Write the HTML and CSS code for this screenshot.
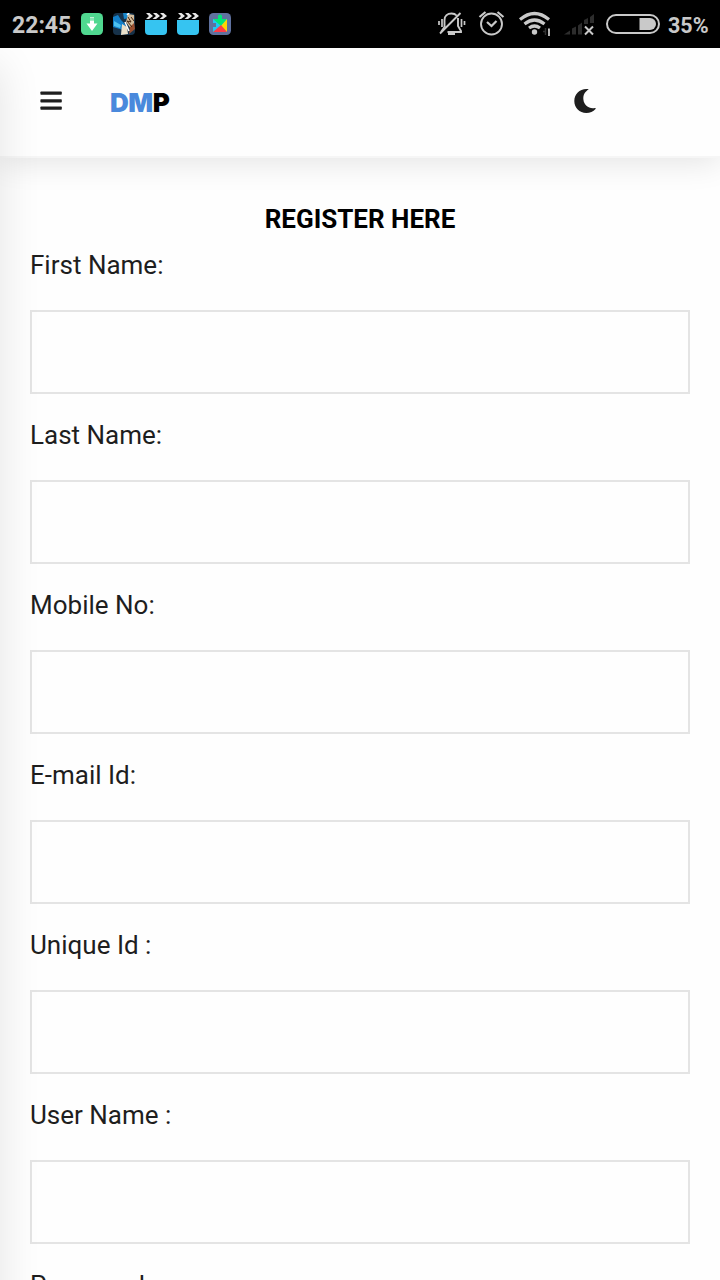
FILE: index.html
```html
<!DOCTYPE html>
<html lang="en">
<head>
<meta charset="utf-8">
<title>Register</title>
<link rel="stylesheet" href="styles.css">
</head>
<body>
<div class="statusbar">
  <span class="clock">22:45</span>
  <div class="notifications">
    <svg width="22" height="22" viewBox="0 0 22 22"><rect width="22" height="22" rx="4.500" fill="#50d890"/><path d="M9 7.500h4v3h3.500L11 18l-5.500-7.500H9z" fill="#fff"/><path d="M9 4.500h4M9 6h4" stroke="#c3f2d9"/></svg>
    <svg width="22" height="22" viewBox="0 0 22 22"><defs><clipPath id="g"><rect width="22" height="22" rx="4"/></clipPath></defs><g clip-path="url(#g)"><rect width="22" height="22" fill="#17324a"/><path d="M0 4l5-2 3 5 5 5-3 5-10-3z" fill="#137fc9"/><path d="M1 8l7 4-1 3-6-2z" fill="#4bc0ef"/><path d="M10 0h7l-1 5-5 1z" fill="#1987cb"/><path d="M15 1l6 1v9l-3 5-5-7z" fill="#d3bc9b"/><path d="M9 11l5 3 1 7-7 1z" fill="#e9dfc9"/><path d="M17 14l4-4 1 6-6 5z" fill="#9c4f2e"/><path d="M15 4l3 5-4-1 5 6M18 4l3 4" stroke="#47250f" stroke-width="1" fill="none"/><path d="M14 2l2-2M12 9l4 9" stroke="#fff" stroke-width="1.500"/></g></svg>
    <svg width="22" height="22" viewBox="0 0 22 22"><path d="M0 7h22v11a4 4 0 0 1-4 4H4a4 4 0 0 1-4-4z" fill="#36c4f1"/><path d="M1 0h3.500l3.500 3-4 3H1l3-3zM8 0h3.500L15 3l-4 3H7.500l3.500-3zM15 0h3.500L22 3l-4 3h-3.500L18 3z" fill="#e8e8e8"/></svg>
    <svg width="22" height="22" viewBox="0 0 22 22"><path d="M0 7h22v11a4 4 0 0 1-4 4H4a4 4 0 0 1-4-4z" fill="#36c4f1"/><path d="M1 0h3.500l3.500 3-4 3H1l3-3zM8 0h3.500L15 3l-4 3H7.500l3.500-3zM15 0h3.500L22 3l-4 3h-3.500L18 3z" fill="#e8e8e8"/></svg>
    <svg width="22" height="22" viewBox="0 0 22 22"><rect width="22" height="22" rx="4.500" fill="#5f719e"/><path d="M4 6h14v13H4v-5h3v-4H4z" fill="#20c9f4"/><path d="M4 6h5V4.500a2.200 2.200 0 1 1 4 0V6h5l-6 7z" fill="#00e676"/><path d="M18 6v13l-6-6z" fill="#ffd500"/><path d="M4 19l8-7 6 7z" fill="#ff3b47"/></svg>
  </div>
  <div class="system">
    <svg width="262" height="48" viewBox="434 0 262 48" fill="none" stroke="#c9c9c9" stroke-width="1.900">
      <path d="M444.500 27V20c0-4 3-6.500 7-6.500 2 0 4 .700 5 2M458 18v8l3 5v1h-13.500M441 32l3.500-5M460.500 13L440 33.500"/>
      <path d="M448 34h7" stroke-width="2"/>
      <path d="M442 19v8M439 21v4M461.500 19v8M464.500 21v4" stroke-width="1.700"/>
      <circle cx="491.500" cy="24" r="10.500"/><path d="M487 22l4.500 4 5-5M479.500 17l6-5M503.500 17l-6-5" stroke-width="2.200"/>
      <path d="M520 19.500q14.500-12 29 0M524.500 24q10-8 20 0M529 28q5.500-4 11 0" stroke-width="3.200"/><circle cx="534.500" cy="32" r="2.700" fill="#c9c9c9" stroke="none"/>
      <path d="M545.500 28v7M543 31.500h2" stroke="#333" stroke-width="1.500"/><path d="M548 29.500h1v6.500" stroke-width="1.800"/>
      <path d="M564 34.500l6-4v4zM572 34.500v-6l4-2v8zM578 34.500v-9l4-3v12zM584 24v-4l4-2v6zM590 23v-6l4-3v9z" fill="#2d2d2d" stroke="none"/>
      <path d="M585 26.500l8 8M593 26.500l-8 8" stroke-width="2"/>
      <rect x="607" y="15" width="52" height="18" rx="9" stroke-width="2"/><path d="M639.500 18H650a6 6 0 0 1 0 12h-10.500z" fill="#c9c9c9" stroke="none"/>
    </svg>
    <span class="percent">35%</span>
  </div>
</div>
<div class="page">
  <aside class="drawer"></aside>
  <header class="header">
    <svg width="22" height="20" viewBox="0 0 22 20"><g fill="#1e1e1e"><rect y="0.500" x=".4" width="21.400" height="3.200" rx=".7"/><rect y="8.200" x=".4" width="21.400" height="3.200" rx=".7"/><rect y="15.600" x=".4" width="21.400" height="3.200" rx=".7"/></g></svg>
    <div class="logo"><span class="logo-accent">DM</span>P</div>
    <svg class="moon" width="22" height="24" viewBox="0 0 22 24"><path d="M14.800.300C10.500 3.200 9 6.200 9.400 10.500c.600 6 5.600 9.600 11.500 8.500.700-.100 1 .400.600.900C19.300 22.600 16 24 12.300 24 5.500 24 .300 18.700.300 12S5.500 0 12.300 0c.800 0 1.700.100 2.500.300z" fill="#1e1e1e"/></svg>
  </header>
  <main class="form">
    <h1 class="title">REGISTER HERE</h1>
    <div class="field"><label class="label" for="f1">First Name:</label><input class="input" id="f1"></div>
    <div class="field"><label class="label" for="f2">Last Name:</label><input class="input" id="f2"></div>
    <div class="field"><label class="label" for="f3">Mobile No:</label><input class="input" id="f3"></div>
    <div class="field"><label class="label" for="f4">E-mail Id:</label><input class="input" id="f4"></div>
    <div class="field"><label class="label" for="f5">Unique Id :</label><input class="input" id="f5"></div>
    <div class="field"><label class="label" for="f6">User Name :</label><input class="input" id="f6"></div>
    <div class="field"><label class="label" for="f7">Password :</label><input class="input" id="f7" type="password"></div>
  </main>
</div>
</body>
</html>
```
FILE: styles.css
```css
* { box-sizing: border-box; }
body {
  margin: 0;
  height: 1280px;
  overflow: hidden;
  background: #fefefe;
  color: #1e1e1e;
  font-family: Roboto, "Liberation Sans", sans-serif;
}
.statusbar {
  display: flex;
  align-items: center;
  height: 48px;
  padding-left: 12px;
  background: #000;
  color: #c9c9c9;
}
.clock, .percent {
  font-size: 23px;
  font-weight: 700;
  line-height: 48px;
  padding-top: 3px;
}
.clock { width: 69px; }
.notifications { display: flex; gap: 10px; }
.system { display: flex; align-items: center; margin-left: auto; width: 286px; flex: none; }
.system svg { flex: none; }
.percent { margin-left: -28px; font-size: 21.5px; }
.page {
  position: relative;
  height: 1232px;
  overflow: hidden;
}
.drawer {
  position: absolute;
  z-index: 2;
  left: -300px;
  top: 18px;
  width: 300px;
  height: 1400px;
  box-shadow: 0 0 40px rgba(0, 0, 0, .11);
}
.header {
  display: flex;
  align-items: center;
  height: 110px;
  padding: 0 124px 2px 40px;
  border-bottom: 2px solid #f6f6f6;
  background: #fefefe;
  box-shadow: 0 4px 30px rgba(0, 0, 0, .11);
}
.logo {
  margin-left: 48px;
  padding-top: 3px;
  color: #000;
  font: 900 26px/40px Inter, sans-serif;
  letter-spacing: -.5px;
}
.logo-accent { color: #4a89dc; }
.moon { margin-left: auto; }
.form { padding: 41px 30px 0; }
.title {
  margin: 0;
  color: #000;
  font-size: 26px;
  font-weight: 700;
  line-height: 41px;
  text-align: center;
}
.field { height: 170px; }
.label {
  display: block;
  font-size: 26px;
  line-height: 50px;
}
.input {
  display: block;
  width: 100%;
  height: 84px;
  margin: 20px 0 0;
  border: 2px solid #e4e4e4;
  background: transparent;
  outline: 0;
}
```
